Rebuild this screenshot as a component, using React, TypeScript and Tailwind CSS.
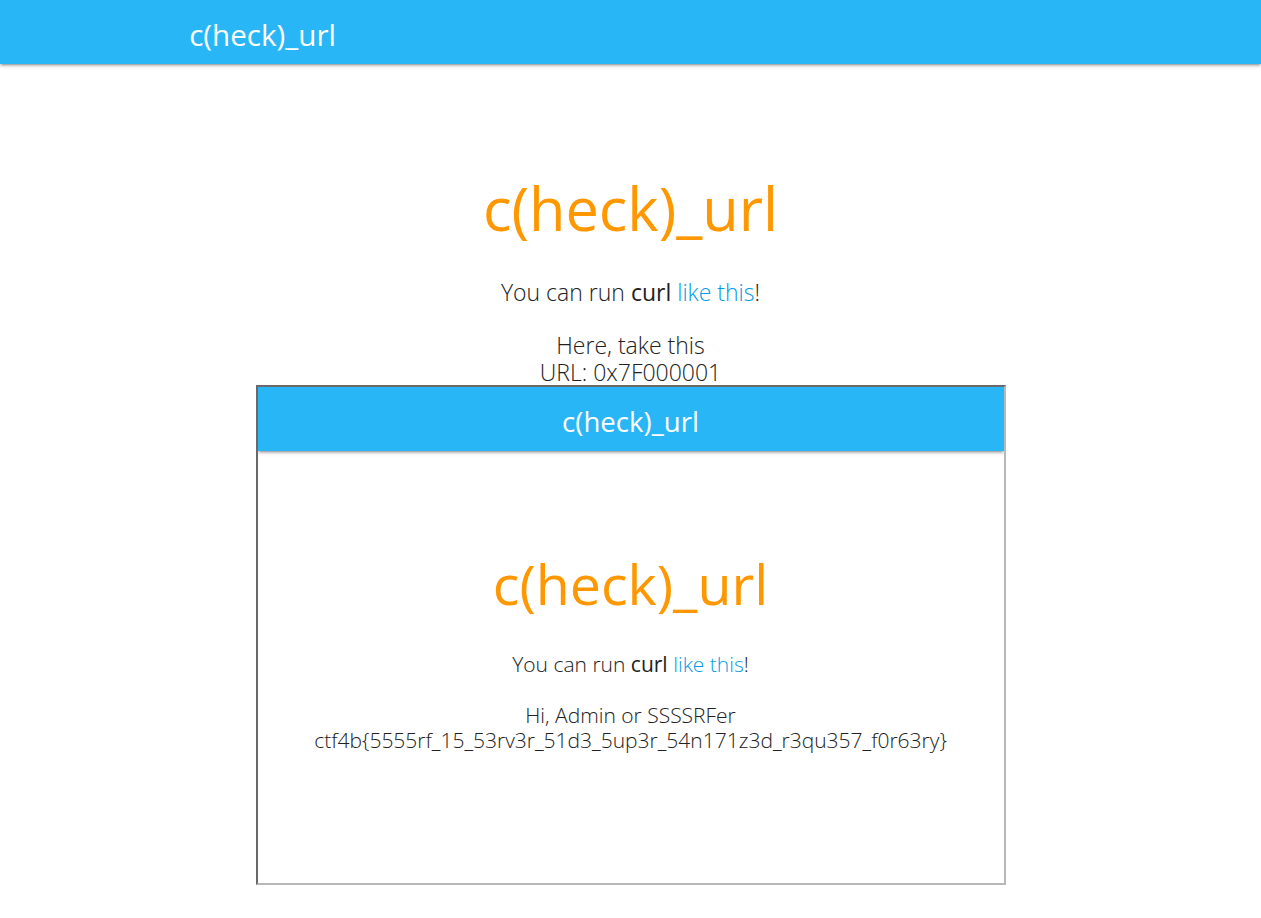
import React from "react";

const navShadow =
  "shadow-[0_2px_2px_0_rgba(0,0,0,0.14),0_3px_1px_-2px_rgba(0,0,0,0.12),0_1px_5px_0_rgba(0,0,0,0.2)]";

function Page({ inner }: { inner?: boolean }) {
  return (
    <div className="text-center">
      {inner ? (
        <h1 className="mt-[100px] text-[55.5px] leading-[65px] font-normal text-[#ff9800]">c(heck)_url</h1>
      ) : (
        <h1 className="mt-[109px] text-[59.5px] leading-[69px] font-normal text-[#ff9800]">c(heck)_url</h1>
      )}
      {inner ? (
        <p className="mt-[36px] text-[21px] leading-[25.3px] font-light">
          You can run <b className="font-normal">curl</b> <a className="text-[#039be5]">like this</a>!
          <br />
          <br />
          Hi, Admin or SSSSRFer
          <br />
          ctf4b{"{5555rf_15_53rv3r_51d3_5up3r_54n171z3d_r3qu357_f0r63ry}"}
        </p>
      ) : (
        <p className="mt-[36.6px] text-[23px] leading-[26.7px] font-light">
          You can run <b className="font-normal">curl</b> <a className="text-[#039be5]">like this</a>!
          <br />
          <br />
          Here, take this
          <br />
          URL: 0x7F000001
        </p>
      )}
    </div>
  );
}

export default function App() {
  return (
    <div className="min-h-screen bg-white font-['Open_Sans','Noto_Sans',sans-serif] text-[#212121]">
      {/* top bar */}
      <nav className={`relative h-16 bg-[#29b6f6] text-white ${navShadow}`}>
        <div className="mx-auto flex h-full w-[70%] items-start pt-[6px]">
          <span className="text-[29.6px] leading-[58px]">c(heck)_url</span>
        </div>
      </nav>

      <Page />

      {/* framed result of the curl */}
      <div className="mx-auto h-[500px] w-[750px] overflow-hidden border-2 border-t-[#696969] border-l-[#696969] border-r-[#b8b8b8] border-b-[#b8b8b8] bg-white">
        <nav className={`relative flex h-16 items-start justify-center bg-[#29b6f6] pt-[4px] text-white ${navShadow}`}>
          <span className="text-[27.6px] leading-[60px]">c(heck)_url</span>
        </nav>
        <Page inner />
      </div>
    </div>
  );
}
